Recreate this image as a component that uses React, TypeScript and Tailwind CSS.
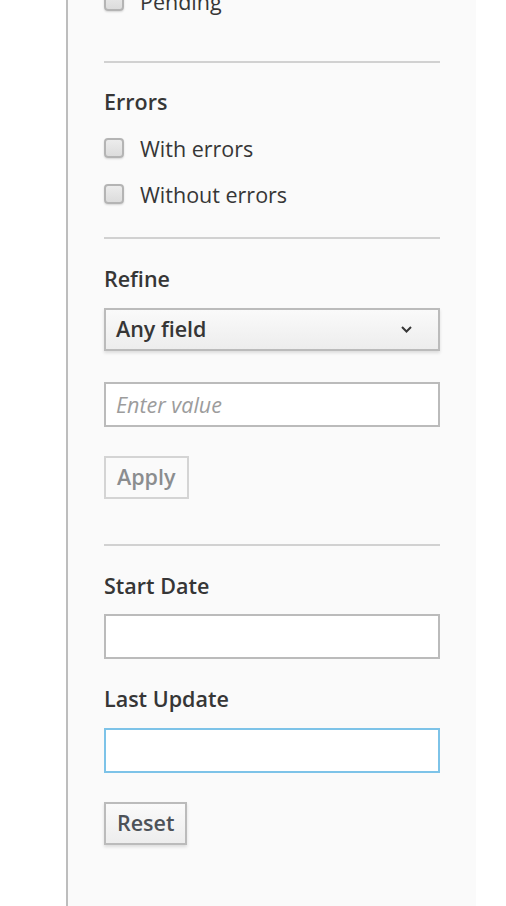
import React from "react";

function Check({ label, className = "" }: { label: string; className?: string }) {
  return (
    <label className={`flex h-[46px] items-center gap-[16px] ${className}`}>
      <input
        type="checkbox"
        className="h-[20px] w-[20px] shrink-0 appearance-none rounded-[4px] border-2 border-[#b4b4b4] bg-linear-to-b from-[#ececec] to-[#dcdcdc] shadow-[0_1px_2px_rgba(0,0,0,0.15)]"
      />
      <span className="leading-[29px] text-[#363636]">{label}</span>
    </label>
  );
}

function Heading({ children, className = "" }: { children: React.ReactNode; className?: string }) {
  return <div className={`font-semibold leading-[29px] text-[#363636] ${className}`}>{children}</div>;
}

function Divider({ className = "" }: { className?: string }) {
  return <div className={`h-[2px] bg-[#d1d1d1] ${className}`} />;
}

export default function App() {
  return (
    <div className="flex h-screen overflow-hidden bg-white font-['Open_Sans',sans-serif] text-[21.5px]">
      <div className="w-[66px] shrink-0" />
      <div className="flex w-[410px] shrink-0 flex-col border-l-2 border-[#bdbdbd] bg-[#fafafa] px-[36px]">
        {/* previous group, scrolled mostly out of view */}
        <Check label="Pending" className="-mt-[22px]" />
        <Divider className="mt-[37px]" />

        <Heading className="mt-[24px]">Errors</Heading>
        <Check label="With errors" className="mt-[9px]" />
        <Check label="Without errors" />
        <Divider className="mt-[20px]" />

        <Heading className="mt-[25px]">Refine</Heading>
        <button className="mt-[15px] flex h-[43px] items-center justify-between border-2 border-[#bbbbbb] bg-linear-to-b from-[#fafafa] to-[#ededed] pl-[10px] pr-[26px] font-semibold text-[#363636] shadow-[0_2px_3px_rgba(3,3,3,0.12)]">
          <span>Any field</span>
          <svg width="11" height="7" viewBox="0 0 11 7" fill="none">
            <polyline points="1,1 5.5,5.5 10,1" stroke="#363636" strokeWidth="2" />
          </svg>
        </button>
        <input
          placeholder="Enter value"
          className="mt-[31px] h-[45px] border-2 border-[#bbbbbb] bg-white px-[10px] text-[#363636] outline-none placeholder:italic placeholder:text-[#9c9c9c]"
        />
        <div className="mt-[29px] flex">
          <button className="h-[43px] border-2 border-[#d4d4d4] bg-[#fafafa] px-[11px] font-semibold text-[#8b8d8f]">
            Apply
          </button>
        </div>
        <Divider className="mt-[45px]" />

        <Heading className="mt-[25px]">Start Date</Heading>
        <input className="mt-[14px] h-[45px] border-2 border-[#bbbbbb] bg-white px-[10px] outline-none" />
        <Heading className="mt-[25px]">Last Update</Heading>
        <input className="mt-[15px] h-[45px] border-2 border-[#7dc3e8] bg-white px-[10px] outline-none" />
        <div className="mt-[29px] flex">
          <button className="h-[43px] border-2 border-[#bbbbbb] bg-linear-to-b from-[#fafafa] to-[#ededed] px-[11px] font-semibold text-[#4d5258] shadow-[0_2px_3px_rgba(3,3,3,0.12)]">
            Reset
          </button>
        </div>
      </div>
      <div className="flex-1" />
    </div>
  );
}
